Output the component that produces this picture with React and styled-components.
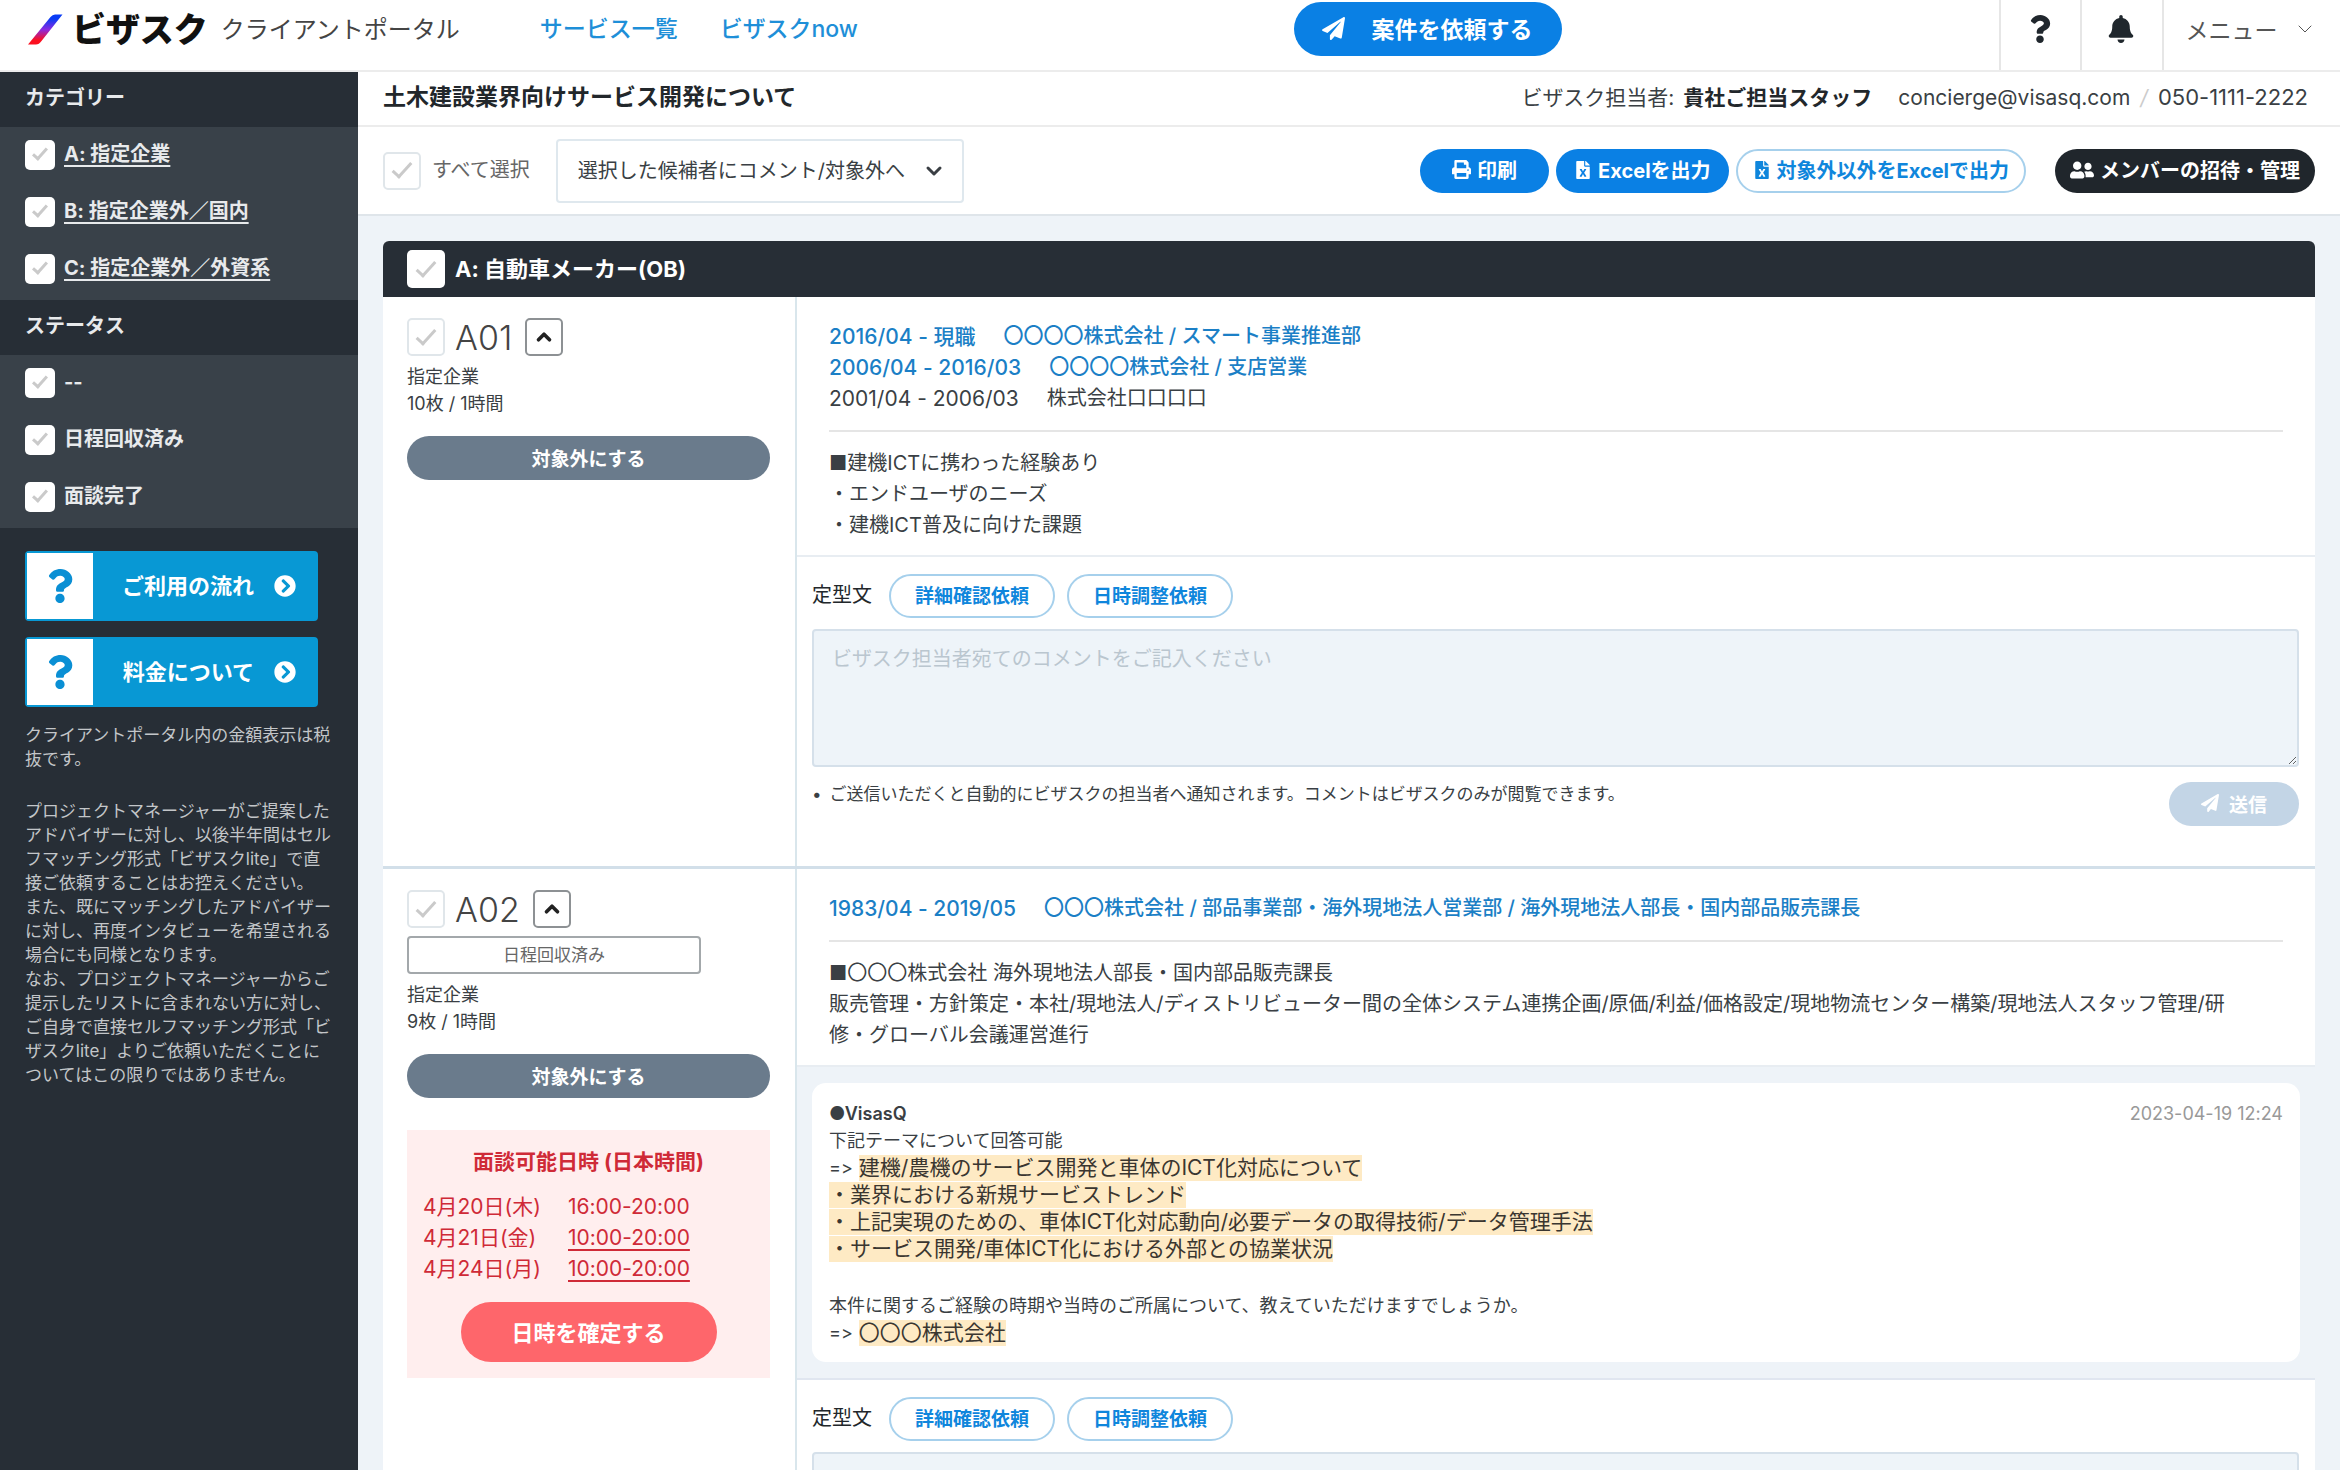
import React from "react";
import styled, { createGlobalStyle, css } from "styled-components";
import {
  FaPaperPlane,
  FaQuestion,
  FaBell,
  FaPrint,
  FaFileExcel,
  FaUserFriends,
  FaChevronCircleRight,
} from "react-icons/fa";
import { FiChevronDown, FiChevronUp } from "react-icons/fi";

const GlobalStyle = createGlobalStyle`
  *, *::before, *::after { box-sizing: border-box; }
  html { scrollbar-width: none; }
  body {
    margin: 0;
    background: #eef3f8;
    color: #3a3f44;
    font-family: Inter, "Noto Sans CJK JP", sans-serif;
    font-size: 20px;
    line-height: 31px;
    font-variant-ligatures: none;
  }
  button, select, textarea, input { font-family: inherit; margin: 0; }
  button { cursor: pointer; }
  p, h1, h2, h3, ul { margin: 0; padding: 0; }
  ul { list-style: none; }
`;

const Shell = styled.div`
  display: flex;
  flex-direction: column;
  min-height: 100vh;
`;

/* ---------- header ---------- */

const Header = styled.header`
  display: flex;
  justify-content: space-between;
  flex: none;
  height: 72px;
  background: #fff;
  border-bottom: 2px solid #ececec;
`;

const HeaderGroup = styled.div`
  display: flex;
  align-items: center;
  padding: 0 0 12px ${(p) => p.$inset || 0}px;
`;

const Brand = styled.a`
  display: flex;
  align-items: center;
  gap: 9px;
  color: #111;
  font-size: 34px;
  font-weight: 900;
  text-decoration: none;
`;

const PortalName = styled.span`
  margin-left: 13px;
  font-size: 24px;
  color: #444;
`;

const HeaderNav = styled.nav`
  display: flex;
  gap: 42px;
  margin-left: 80px;
`;

const NavLink = styled.a`
  color: #1e8fd8;
  font-size: 23px;
  font-weight: 500;
  text-decoration: none;
`;

const RequestButton = styled.button`
  display: flex;
  align-items: center;
  gap: 26px;
  height: 54px;
  padding: 0 30px 2px 28px;
  border: 0;
  border-radius: 27px;
  background: #0a80e4;
  color: #fff;
  font-size: 23px;
  font-weight: 700;
`;

const HeaderTools = styled.div`
  display: flex;
`;

const HeaderTool = styled.button`
  display: flex;
  align-items: center;
  justify-content: center;
  gap: 15px;
  width: ${(p) => p.$width}px;
  padding: 0 2px 12px 0;
  border: 0;
  border-left: 2px solid #e6e6e6;
  background: #fff;
  color: ${(p) => p.$color || "#20272d"};
  font-size: 23px;
`;

/* ---------- layout ---------- */

const Body = styled.div`
  display: flex;
  flex: 1;
`;

const Sidebar = styled.aside`
  flex: none;
  width: 358px;
  background: #272e36;
  color: #e8eaec;
`;

const Main = styled.main`
  flex: 1;
  min-width: 0;
`;

/* ---------- shared controls ---------- */

const Check = styled.input.attrs({ type: "checkbox" })`
  appearance: none;
  display: grid;
  place-items: center;
  flex: none;
  width: ${(p) => (p.$small ? 30 : 38)}px;
  height: ${(p) => (p.$small ? 30 : 38)}px;
  border: ${(p) => (p.$plain ? "0" : "2px solid #e0e6ea")};
  border-radius: 5px;
  background: #fff;
  &::after {
    content: "";
    width: ${(p) => (p.$small ? 8 : 10)}px;
    height: ${(p) => (p.$small ? 15 : 20)}px;
    margin-bottom: 5px;
    border: solid #cacaca;
    border-width: 0 3px 3px 0;
    transform: rotate(42deg);
  }
`;

const Pill = styled.button`
  display: inline-flex;
  align-items: center;
  justify-content: center;
  gap: ${(p) => p.$gap || 6}px;
  height: 44px;
  padding: 0 ${(p) => p.$pad || 20}px 2px;
  border: 0;
  border-radius: 22px;
  background: ${(p) => p.$bg || "#0a80e4"};
  color: #fff;
  font-size: ${(p) => (p.$large ? 20 : 19)}px;
  font-weight: 700;
  white-space: nowrap;
  ${(p) =>
    p.$outline &&
    css`
      border: 2px solid #a6d0ec;
      background: #fff;
      color: #0f86dc;
    `}
  ${(p) =>
    p.$block &&
    css`
      width: 100%;
    `}
`;

/* ---------- sidebar ---------- */

const SideTitle = styled.h2`
  height: 55px;
  padding-left: 25px;
  font-size: 20px;
  line-height: 52px;
  font-weight: 700;
`;

const SideList = styled.ul`
  padding-bottom: 2px;
  background: #394149;
`;

const SideItem = styled.li`
  display: flex;
  align-items: center;
  gap: 9px;
  height: 57px;
  padding: 0 0 2px 25px;
  font-weight: 700;
  label {
    text-decoration: ${(p) => (p.$link ? "underline" : "none")};
    text-underline-offset: 4px;
  }
`;

const HelpLinks = styled.nav`
  display: flex;
  flex-direction: column;
  gap: 16px;
  padding: 23px 40px 0 25px;
`;

const HelpLink = styled.a`
  display: flex;
  align-items: center;
  height: 70px;
  border: 2px solid #0898d4;
  border-radius: 4px;
  background: #0898d4;
  color: #fff;
  font-size: 22px;
  font-weight: 700;
  text-decoration: none;
`;

const HelpMark = styled.span`
  display: grid;
  place-items: center;
  width: 66px;
  height: 100%;
  background: #fff;
  color: #0a8fd4;
`;

const HelpText = styled.span`
  flex: 1;
  display: flex;
  align-items: center;
  justify-content: flex-end;
  gap: 20px;
  padding-right: 20px;
`;

const SideNotes = styled.div`
  display: flex;
  flex-direction: column;
  gap: 28px;
  width: 332px;
  padding: 16px 0 0 25px;
  color: #c3c6c9;
  font-size: 17px;
  line-height: 24px;
`;

/* ---------- title and toolbar ---------- */

const TitleBar = styled.div`
  display: flex;
  align-items: center;
  justify-content: space-between;
  height: 55px;
  padding: 0 32px 2px 25px;
  background: #fff;
  border-bottom: 2px solid #ececec;
`;

const PageTitle = styled.h1`
  font-size: 23px;
  font-weight: 700;
  color: #22272b;
`;

const Contact = styled.div`
  display: flex;
  align-items: center;
  font-size: 21px;
  a {
    margin-left: 26px;
    color: inherit;
    text-decoration: none;
  }
  strong {
    margin-left: 9px;
    color: #22272b;
  }
  i {
    margin: 0 10px;
    color: #ccc;
  }
`;

const Phone = styled.span`
  font-size: 22px;
`;

const Toolbar = styled.div`
  display: flex;
  align-items: center;
  height: 89px;
  padding: 0 25px;
  background: #fff;
  border-bottom: 2px solid #dfe5ea;
`;

const SelectAll = styled.div`
  display: flex;
  align-items: center;
  gap: 11px;
  margin-right: 26px;
  color: #666;
`;

const SelectBox = styled.div`
  position: relative;
  width: 408px;
  svg {
    position: absolute;
    right: 18px;
    top: 20px;
    pointer-events: none;
  }
`;

const BulkSelect = styled.select`
  appearance: none;
  width: 100%;
  height: 64px;
  padding: 0 20px;
  border: 2px solid #dfe8ee;
  border-radius: 4px;
  background: #fff;
  color: #3a3f44;
  font-size: 20px;
`;

const Actions = styled.div`
  display: flex;
  gap: 7px;
  margin-left: auto;
`;

const MemberButton = styled(Pill)`
  margin-left: 22px;
`;

/* ---------- candidate list ---------- */

const Group = styled.section`
  margin: 25px;
  border-radius: 6px;
  background: #fff;
`;

const GroupHeader = styled.div`
  display: flex;
  align-items: center;
  gap: 10px;
  height: 56px;
  padding-left: 24px;
  border-radius: 6px 6px 0 0;
  background: #272e36;
  color: #fff;
  font-size: 22px;
  font-weight: 700;
`;

const Candidate = styled.article`
  display: grid;
  grid-template-columns: 414px minmax(0, 1fr);
  border-bottom: 3px solid #d2dfe9;
`;

const Summary = styled.div`
  padding: 21px 25px 21px 24px;
  border-right: 2px solid #d9e6ec;
`;

const CodeRow = styled.div`
  display: flex;
  align-items: center;
  gap: 10px;
  height: 38px;
`;

const Code = styled.label`
  margin-right: 3px;
  font-size: 34px;
  font-weight: 300;
  color: #444;
`;

const Toggle = styled.button`
  display: grid;
  place-items: center;
  width: 38px;
  height: 38px;
  padding: 0;
  border: 2px solid #8d9194;
  border-radius: 5px;
  background: #fff;
  color: #222;
`;

const Status = styled.div`
  width: 294px;
  height: 38px;
  margin-top: 8px;
  border: 2px solid #a3a8ab;
  border-radius: 4px;
  color: #666;
  font-size: 17px;
  line-height: 34px;
  text-align: center;
`;

const Terms = styled.p`
  margin: 7px 0 19px;
  font-size: 18px;
  line-height: 27px;
`;

const Schedule = styled.section`
  margin-top: 32px;
  padding: 16px;
  background: #ffeeee;
  color: #cf2a37;
  text-align: center;
`;

const ScheduleTitle = styled.h3`
  margin-bottom: 14px;
  font-size: 21px;
  font-weight: 700;
`;

const ScheduleTable = styled.table`
  border-collapse: collapse;
  font-size: 21px;
  text-align: left;
  th, td {
    height: 31px;
    padding: 0;
    font-weight: 400;
  }
  th { width: 145px; }
  a {
    color: inherit;
    text-underline-offset: 4px;
  }
`;

const ConfirmButton = styled.button`
  width: 256px;
  height: 60px;
  margin-top: 18px;
  padding: 0 0 2px;
  border: 0;
  border-radius: 30px;
  background: #fe666b;
  color: #fff;
  font-size: 22px;
  font-weight: 700;
`;

const Profile = styled.div`
  padding: 24px 32px 14px;
  border-bottom: 2px solid #e8edf2;
`;

const Career = styled.p`
  display: flex;
  gap: 28px;
  color: ${(p) => (p.$past ? "#3a3f44" : "#1b7fc6")};
  font-weight: ${(p) => (p.$past ? 400 : 500)};
`;

const Period = styled.span`
  font-size: 21px;
`;

const Detail = styled.div`
  margin-top: 16px;
  padding-top: 16px;
  border-top: 2px solid #e5e5e5;
`;

const Thread = styled.div`
  padding: 16px 15px;
  border-bottom: 2px solid #e0e6f0;
  background: #eef3f8;
`;

const Message = styled.div`
  display: flex;
  justify-content: space-between;
  align-items: flex-start;
  padding: 17px 17px 16px;
  border-radius: 14px;
  background: #fff;
  font-size: 18px;
  line-height: 27px;
`;

const MessageText = styled.div`
  display: flex;
  flex-direction: column;
  gap: 30px;
`;

const Line = styled.p`
  display: flex;
  align-items: center;
  gap: 6px;
  height: 27px;
  font-weight: ${(p) => (p.$strong ? 600 : 400)};
`;

const Highlight = styled.mark`
  background: #feeac4;
  color: #3a3630;
  font-size: 21px;
  line-height: 26px;
`;

const Time = styled.time`
  color: #999;
`;

const Reply = styled.form`
  padding: 16px 16px 40px 15px;
`;

const Templates = styled.div`
  display: flex;
  align-items: center;
  gap: 12px;
  height: 45px;
  margin-bottom: 11px;
`;

const TemplateLabel = styled.span`
  margin-right: 5px;
  color: #22272b;
`;

const Comment = styled.textarea`
  display: block;
  width: 100%;
  height: 138px;
  padding: 13px 18px;
  border: 2px solid #d5e0ea;
  border-radius: 4px;
  background: #eef4f9;
  font-size: 20px;
  line-height: 31px;
  &::placeholder { color: #bac6cf; }
`;

const ReplyFooter = styled.div`
  display: flex;
  justify-content: space-between;
  align-items: flex-start;
  margin-top: 15px;
`;

const ReplyNote = styled.p`
  display: flex;
  gap: 8px;
  font-size: 17px;
  line-height: 24px;
`;

/* ---------- data ---------- */

const categories = ["A: 指定企業", "B: 指定企業外／国内", "C: 指定企業外／外資系"];
const statuses = ["--", "日程回収済み", "面談完了"];

const candidates = [
  {
    code: "A01",
    terms: ["指定企業", "10枚 / 1時間"],
    careers: [
      { period: "2016/04 - 現職", text: "〇〇〇〇株式会社 / スマート事業推進部" },
      { period: "2006/04 - 2016/03", text: "〇〇〇〇株式会社 / 支店営業" },
      { period: "2001/04 - 2006/03", text: "株式会社口口口口", past: true },
    ],
    detail: ["■建機ICTに携わった経験あり", "・エンドユーザのニーズ", "・建機ICT普及に向けた課題"],
  },
  {
    code: "A02",
    status: "日程回収済み",
    terms: ["指定企業", "9枚 / 1時間"],
    schedule: [
      { day: "4月20日(木)", time: "16:00-20:00" },
      { day: "4月21日(金)", time: "10:00-20:00", open: true },
      { day: "4月24日(月)", time: "10:00-20:00", open: true },
    ],
    careers: [
      {
        period: "1983/04 - 2019/05",
        text: "〇〇〇株式会社 / 部品事業部・海外現地法人営業部 / 海外現地法人部長・国内部品販売課長",
      },
    ],
    detail: [
      "■〇〇〇株式会社 海外現地法人部長・国内部品販売課長",
      "販売管理・方針策定・本社/現地法人/ディストリビューター間の全体システム連携企画/原価/利益/価格設定/現地物流センター構築/現地法人スタッフ管理/研",
      "修・グローバル会議運営進行",
    ],
    message: {
      time: "2023-04-19 12:24",
      blocks: [
        [
          { text: "●VisasQ", strong: true },
          { text: "下記テーマについて回答可能" },
          { text: "=>", mark: "建機/農機のサービス開発と車体のICT化対応について" },
          { mark: "・業界における新規サービストレンド" },
          { mark: "・上記実現のための、車体ICT化対応動向/必要データの取得技術/データ管理手法" },
          { mark: "・サービス開発/車体ICT化における外部との協業状況" },
        ],
        [
          { text: "本件に関するご経験の時期や当時のご所属について、教えていただけますでしょうか。" },
          { text: "=>", mark: "〇〇〇株式会社" },
        ],
      ],
    },
  },
];

/* ---------- parts ---------- */

function LogoMark() {
  return (
    <svg width="35" height="31" viewBox="0 0 35 31" aria-hidden="true">
      <defs>
        <linearGradient id="slash" x1="0" y1="1" x2="0" y2="0">
          <stop offset="0.15" stopColor="#fb1020" />
          <stop offset="0.5" stopColor="#8a2be0" />
          <stop offset="0.85" stopColor="#0a3cf5" />
        </linearGradient>
      </defs>
      <path d="M0 30.500L22.500 3Q24.500 0.500 27 0.500H34.500L13.500 27Q11 30.500 8 30.500Z" fill="url(#slash)" />
    </svg>
  );
}

function SideSection({ title, items, link }) {
  return (
    <section>
      <SideTitle>{title}</SideTitle>
      <SideList>
        {items.map((item, i) => (
          <SideItem key={item} $link={link}>
            <Check $small $plain id={`${title}-${i}`} />
            <label htmlFor={`${title}-${i}`}>{item}</label>
          </SideItem>
        ))}
      </SideList>
    </section>
  );
}

function HelpItem({ children }) {
  return (
    <HelpLink href="#help">
      <HelpMark>
        <FaQuestion size={34} />
      </HelpMark>
      <HelpText>
        {children}
        <FaChevronCircleRight size={22} />
      </HelpText>
    </HelpLink>
  );
}

function ReplyForm() {
  return (
    <Reply onSubmit={(e) => e.preventDefault()}>
      <Templates>
        <TemplateLabel>定型文</TemplateLabel>
        <Pill type="button" $outline $pad={24}>詳細確認依頼</Pill>
        <Pill type="button" $outline $pad={24}>日時調整依頼</Pill>
      </Templates>
      <Comment
        aria-label="コメント"
        placeholder="ビザスク担当者宛てのコメントをご記入ください"
      />
      <ReplyFooter>
        <ReplyNote>
          <span>•</span>
          ご送信いただくと自動的にビザスクの担当者へ通知されます。コメントはビザスクのみが閲覧できます。
        </ReplyNote>
        <Pill $bg="#c3d5e6" $pad={32} $gap={10}>
          <FaPaperPlane size={18} />
          送信
        </Pill>
      </ReplyFooter>
    </Reply>
  );
}

function CandidateRow({ data }) {
  return (
    <Candidate>
      <Summary>
        <CodeRow>
          <Check id={data.code} />
          <Code htmlFor={data.code}>{data.code}</Code>
          <Toggle aria-label="閉じる">
            <FiChevronUp size={22} strokeWidth={4} />
          </Toggle>
        </CodeRow>
        {data.status && <Status>{data.status}</Status>}
        <Terms>
          {data.terms[0]}
          <br />
          {data.terms[1]}
        </Terms>
        <Pill $block $bg="#6a7b8c">対象外にする</Pill>
        {data.schedule && (
          <Schedule>
            <ScheduleTitle>面談可能日時 (日本時間)</ScheduleTitle>
            <ScheduleTable>
              <tbody>
                {data.schedule.map((s) => (
                  <tr key={s.day}>
                    <th scope="row">{s.day}</th>
                    <td>{s.open ? <a href="#slot">{s.time}</a> : s.time}</td>
                  </tr>
                ))}
              </tbody>
            </ScheduleTable>
            <ConfirmButton>日時を確定する</ConfirmButton>
          </Schedule>
        )}
      </Summary>
      <div>
        <Profile>
          {data.careers.map((c) => (
            <Career key={c.period} $past={c.past}>
              <Period>{c.period}</Period>
              {c.text}
            </Career>
          ))}
          <Detail>
            {data.detail.map((line) => (
              <p key={line}>{line}</p>
            ))}
          </Detail>
        </Profile>
        {data.message && (
          <Thread>
            <Message>
              <MessageText>
                {data.message.blocks.map((block, i) => (
                  <div key={i}>
                    {block.map((l, j) => (
                      <Line key={j} $strong={l.strong}>
                        {l.text}
                        {l.mark && <Highlight>{l.mark}</Highlight>}
                      </Line>
                    ))}
                  </div>
                ))}
              </MessageText>
              <Time>{data.message.time}</Time>
            </Message>
          </Thread>
        )}
        <ReplyForm />
      </div>
    </Candidate>
  );
}

export default function App() {
  return (
    <Shell>
      <GlobalStyle />
      <Header>
        <HeaderGroup $inset={28}>
          <Brand href="#top">
            <LogoMark />
            ビザスク
          </Brand>
          <PortalName>クライアントポータル</PortalName>
          <HeaderNav>
            <NavLink href="#services">サービス一覧</NavLink>
            <NavLink href="#now">ビザスクnow</NavLink>
          </HeaderNav>
        </HeaderGroup>
        <HeaderGroup>
          <RequestButton>
            <FaPaperPlane size={23} />
            案件を依頼する
          </RequestButton>
        </HeaderGroup>
        <HeaderTools>
          <HeaderTool $width={81} aria-label="ヘルプ">
            <FaQuestion size={28} />
          </HeaderTool>
          <HeaderTool $width={82} aria-label="通知">
            <FaBell size={28} />
          </HeaderTool>
          <HeaderTool $width={178} $color="#555">
            メニュー
            <FiChevronDown size={24} strokeWidth={1} />
          </HeaderTool>
        </HeaderTools>
      </Header>
      <Body>
        <Sidebar>
          <SideSection title="カテゴリー" items={categories} link />
          <SideSection title="ステータス" items={statuses} />
          <HelpLinks>
            <HelpItem>ご利用の流れ</HelpItem>
            <HelpItem>料金について</HelpItem>
          </HelpLinks>
          <SideNotes>
            <p>クライアントポータル内の金額表示は税抜です。</p>
            <p>
              プロジェクトマネージャーがご提案したアドバイザーに対し、以後半年間はセルフマッチング形式「ビザスクlite」で直接ご依頼することはお控えください。
              <br />
              また、既にマッチングしたアドバイザーに対し、再度インタビューを希望される場合にも同様となります。
              <br />
              なお、プロジェクトマネージャーからご提示したリストに含まれない方に対し、ご自身で直接セルフマッチング形式「ビザスクlite」よりご依頼いただくことについてはこの限りではありません。
            </p>
          </SideNotes>
        </Sidebar>
        <Main>
          <TitleBar>
            <PageTitle>土木建設業界向けサービス開発について</PageTitle>
            <Contact>
              ビザスク担当者:
              <strong>貴社ご担当スタッフ</strong>
              <a href="mailto:concierge@visasq.com">concierge@visasq.com</a>
              <i>/</i>
              <Phone>050-1111-2222</Phone>
            </Contact>
          </TitleBar>
          <Toolbar>
            <SelectAll>
              <Check id="all" />
              <label htmlFor="all">すべて選択</label>
            </SelectAll>
            <SelectBox>
              <BulkSelect aria-label="一括操作">
                <option>選択した候補者にコメント/対象外へ</option>
              </BulkSelect>
              <FiChevronDown size={24} strokeWidth={3} />
            </SelectBox>
            <Actions>
              <Pill $large $pad={32}>
                <FaPrint size={19} />
                印刷
              </Pill>
              <Pill $large $pad={18}>
                <FaFileExcel size={18} />
                Excelを出力
              </Pill>
              <Pill $large $outline $pad={15}>
                <FaFileExcel size={18} />
                対象外以外をExcelで出力
              </Pill>
              <MemberButton $large $bg="#20262c" $pad={15}>
                <FaUserFriends size={24} />
                メンバーの招待・管理
              </MemberButton>
            </Actions>
          </Toolbar>
          <Group>
            <GroupHeader>
              <Check $plain id="group-a" />
              <label htmlFor="group-a">A: 自動車メーカー(OB)</label>
            </GroupHeader>
            {candidates.map((c) => (
              <CandidateRow key={c.code} data={c} />
            ))}
          </Group>
        </Main>
      </Body>
    </Shell>
  );
}
